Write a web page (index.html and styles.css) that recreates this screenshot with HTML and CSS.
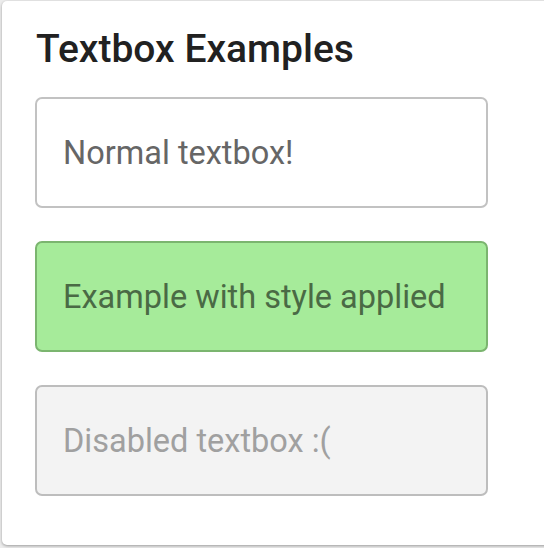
FILE: index.html
```html
<!DOCTYPE html>
<html>
<head>
<meta charset="utf-8">
<link rel="stylesheet" href="styles.css">
</head>
<body>
<div class="card">
  <h1 class="title">Textbox Examples</h1>
  <div class="fields">
    <input class="tb" type="text" value="Normal textbox!">
    <input class="tb tb-styled" type="text" value="Example with style applied">
    <input class="tb" type="text" value="Disabled textbox :(" disabled>
  </div>
</div>
</body>
</html>
```
FILE: styles.css
```css
html, body {
  margin: 0;
  padding: 0;
  background: #ececec;
  overflow: hidden;
}
body {
  width: 544px;
  height: 548px;
  font-family: Roboto, "Liberation Sans", sans-serif;
}
.card {
  box-sizing: border-box;
  margin: 1px 0 0 2px;
  width: 560px;
  height: 544px;
  background: #ffffff;
  border-radius: 5px;
  box-shadow: 0 1px 3px rgba(0,0,0,0.35);
  padding: 24px 0 0 33px;
}
.title {
  margin: 0 0 0 1px;
  font-size: 39px;
  font-weight: 500;
  color: #212121;
  line-height: 48px;
}
.fields {
  margin-top: 24px;
  display: flex;
  flex-direction: column;
  gap: 33px;
}
.tb {
  box-sizing: border-box;
  width: 453px;
  height: 111px;
  border: 2px solid #c2c2c2;
  border-radius: 7px;
  background: #ffffff;
  padding: 0 0 0 26px;
  font-family: Roboto, "Liberation Sans", sans-serif;
  font-size: 32.5px;
  color: #666666;
  outline: none;
  margin: 0;
}
.tb-styled {
  background: #a6eb9a;
  border-color: #7bb56f;
  color: #4a6a45;
}
.tb:disabled {
  background: #f3f3f3;
  color: #a0a0a0;
  border-color: #bdbdbd;
}
```
